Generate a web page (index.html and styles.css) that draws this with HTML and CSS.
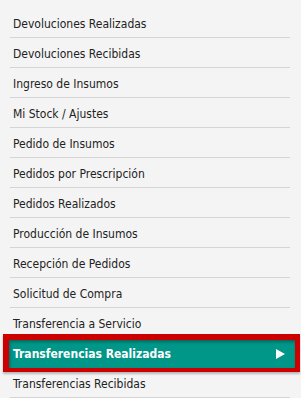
FILE: index.html
```html
<html>
  <head>
    <link rel="stylesheet" href="styles.css">
    <title>Menu</title>
  </head>
  <body>
    <ul id="menu">
      <li class="menuItem">Devoluciones Realizadas</li>
      <li class="menuItem">Devoluciones Recibidas</li>
      <li class="menuItem">Ingreso de Insumos</li>
      <li class="menuItem">Mi Stock / Ajustes</li>
      <li class="menuItem">Pedido de Insumos</li>
      <li class="menuItem">Pedidos por Prescripción</li>
      <li class="menuItem">Pedidos Realizados</li>
      <li class="menuItem">Producción de Insumos</li>
      <li class="menuItem">Recepción de Pedidos</li>
      <li class="menuItem">Solicitud de Compra</li>
      <li class="menuItem">Transferencia a Servicio</li>
      <li class="menuItem active">
        <span class="activeInner">
          Transferencias Realizadas
          <svg class="arrow" width="9" height="10" viewBox="0 0 9 10"><polygon points="0,0 9,5 0,10" fill="#fff"/></svg>
        </span>
      </li>
      <li class="menuItem">Transferencias Recibidas</li>
    </ul>
  </body>
</html>
```

FILE: styles.css
```css
* {
  margin: 0;
  padding: 0;
}
body {
  background: #f4f4f4;
  font-family: "DejaVu Sans Condensed", "DejaVu Sans", sans-serif;
  font-size: 12px;
  color: #222;
}
#menu {
  list-style: none;
  padding: 8px 0 0 10px;
  width: 280px;
}
.menuItem {
  height: 29px;
  line-height: 33px;
  padding-left: 3px;
  border-bottom: 1px solid #d4d4d4;
}
.active {
  position: relative;
  height: 38px;
  margin: -4px -10px -4px -7px;
  padding: 0;
  line-height: normal;
  box-sizing: border-box;
  border-style: solid;
  border-color: #cc0000;
  border-width: 6px 5px 4px 6px;
  background: #009688;
  box-shadow: 0 2px 2px rgba(0, 0, 0, 0.25);
}
.activeInner {
  display: flex;
  align-items: center;
  justify-content: space-between;
  height: 100%;
  padding: 0 10px 0 4px;
  color: #fff;
  font-weight: bold;
  box-shadow: inset 1px 2px 3px rgba(0, 0, 0, 0.3);
}
.arrow {
  display: block;
}
```
